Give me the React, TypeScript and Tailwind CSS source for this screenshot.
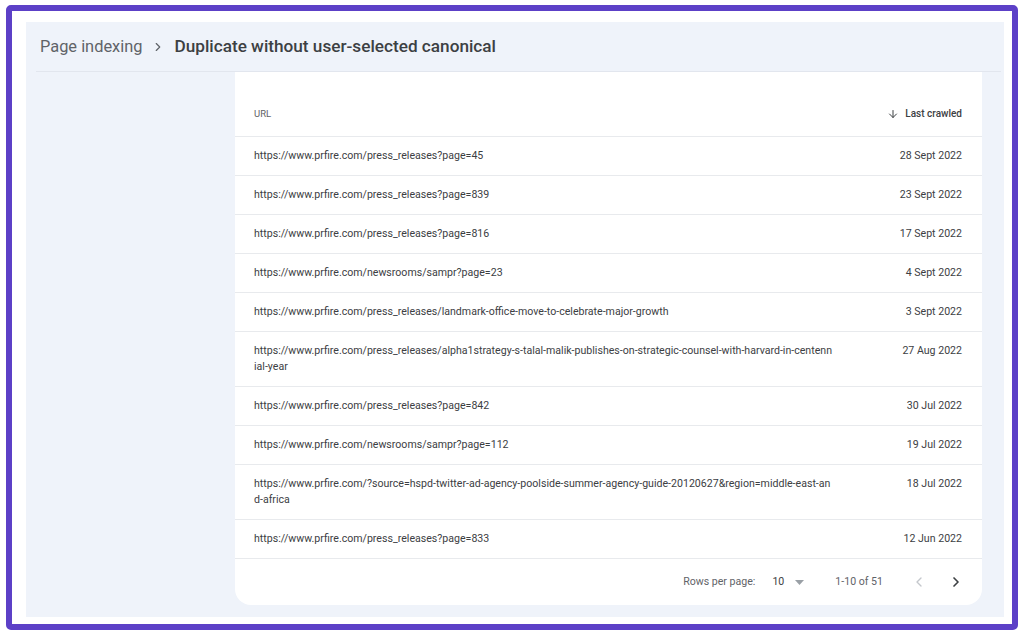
import { ArrowDown, ChevronLeft, ChevronRight } from "lucide-react";
import type { FC } from "react";

type Row = { url: string; date: string; tall?: boolean };

const ROWS: Row[] = [
	{ url: "https://www.prfire.com/press_releases?page=45", date: "28 Sept 2022" },
	{ url: "https://www.prfire.com/press_releases?page=839", date: "23 Sept 2022" },
	{ url: "https://www.prfire.com/press_releases?page=816", date: "17 Sept 2022" },
	{ url: "https://www.prfire.com/newsrooms/sampr?page=23", date: "4 Sept 2022" },
	{
		url: "https://www.prfire.com/press_releases/landmark-office-move-to-celebrate-major-growth",
		date: "3 Sept 2022",
	},
	{
		url: "https://www.prfire.com/press_releases/alpha1strategy-s-talal-malik-publishes-on-strategic-counsel-with-harvard-in-centennial-year",
		date: "27 Aug 2022",
		tall: true,
	},
	{ url: "https://www.prfire.com/press_releases?page=842", date: "30 Jul 2022" },
	{ url: "https://www.prfire.com/newsrooms/sampr?page=112", date: "19 Jul 2022" },
	{
		url: "https://www.prfire.com/?source=hspd-twitter-ad-agency-poolside-summer-agency-guide-20120627&region=middle-east-and-africa",
		date: "18 Jul 2022",
		tall: true,
	},
	{ url: "https://www.prfire.com/press_releases?page=833", date: "12 Jun 2022" },
];

const TableRow: FC<{ row: Row }> = ({ row }) => (
	<div
		className={`flex justify-between border-b border-[#e8eaed] pl-[19px] pr-[20px] ${row.tall ? "h-[55px] items-start pt-[11px]" : "h-[39px] items-center"}`}
	>
		<div className="w-[580px] break-all text-[10.6px] leading-[16px] text-[#3c4043]">{row.url}</div>
		<div className="text-[10.6px] leading-[16px] text-[#3c4043]">{row.date}</div>
	</div>
);

export default function App() {
	return (
		<div
			className="h-[635px] w-[1024px] bg-white pl-[6px] pt-[5px]"
			style={{ fontFamily: "Roboto, 'Liberation Sans', sans-serif" }}
		>
			<div className="h-[625px] w-[1012px] rounded-[5px] border-[6px] border-[#5c40c7] pb-[7px] pl-[14px] pr-[8px] pt-[11px]">
				<div className="flex h-full flex-col bg-[#eff3fa]">
					<div className="flex h-[49px] items-center pl-[14px] pt-[1px] text-[16.4px]">
						<span className="text-[#5f6368]">Page indexing</span>
						<ChevronRight className="ml-[9px] h-[14px] w-[14px] text-[#5f6368]" strokeWidth={2} />
						<span className="ml-[9px] text-[17.2px] font-medium text-[#3c4043]">
							Duplicate without user-selected canonical
						</span>
					</div>
					<div className="ml-[10px] mr-[3px] h-px bg-[#e2e6ee]" />
					<div className="ml-[209px] mr-[22px] flex flex-col rounded-b-[16px] bg-white">
						<div className="flex h-[65px] items-end justify-between border-b border-[#e8eaed] pb-[15px] pl-[19px] pr-[20px]">
							<span className="text-[9.5px] text-[#5f6368]">URL</span>
							<span className="flex items-center gap-[6px] text-[10px] font-medium text-[#3c4043]">
								<ArrowDown className="h-[12px] w-[12px]" strokeWidth={2} />
								Last crawled
							</span>
						</div>
						{ROWS.map((row) => (
							<TableRow key={row.url} row={row} />
						))}
						<div className="flex h-[46px] items-center justify-end pr-[18px] text-[10.6px] text-[#5f6368]">
							<span>Rows per page:</span>
							<span className="ml-[17px] text-[#3c4043]">10</span>
							<svg className="ml-[11px]" width="9" height="5" viewBox="0 0 9 5">
								<path d="M0 0h9L4.5 5z" fill="#9aa0a6" />
							</svg>
							<span className="ml-[31px]">1-10 of 51</span>
							<ChevronLeft className="ml-[28px] h-[16px] w-[16px] text-[#c4c7cc]" strokeWidth={2} />
							<ChevronRight className="ml-[21px] h-[16px] w-[16px] text-[#3c4043]" strokeWidth={2.5} />
						</div>
					</div>
				</div>
			</div>
		</div>
	);
}
